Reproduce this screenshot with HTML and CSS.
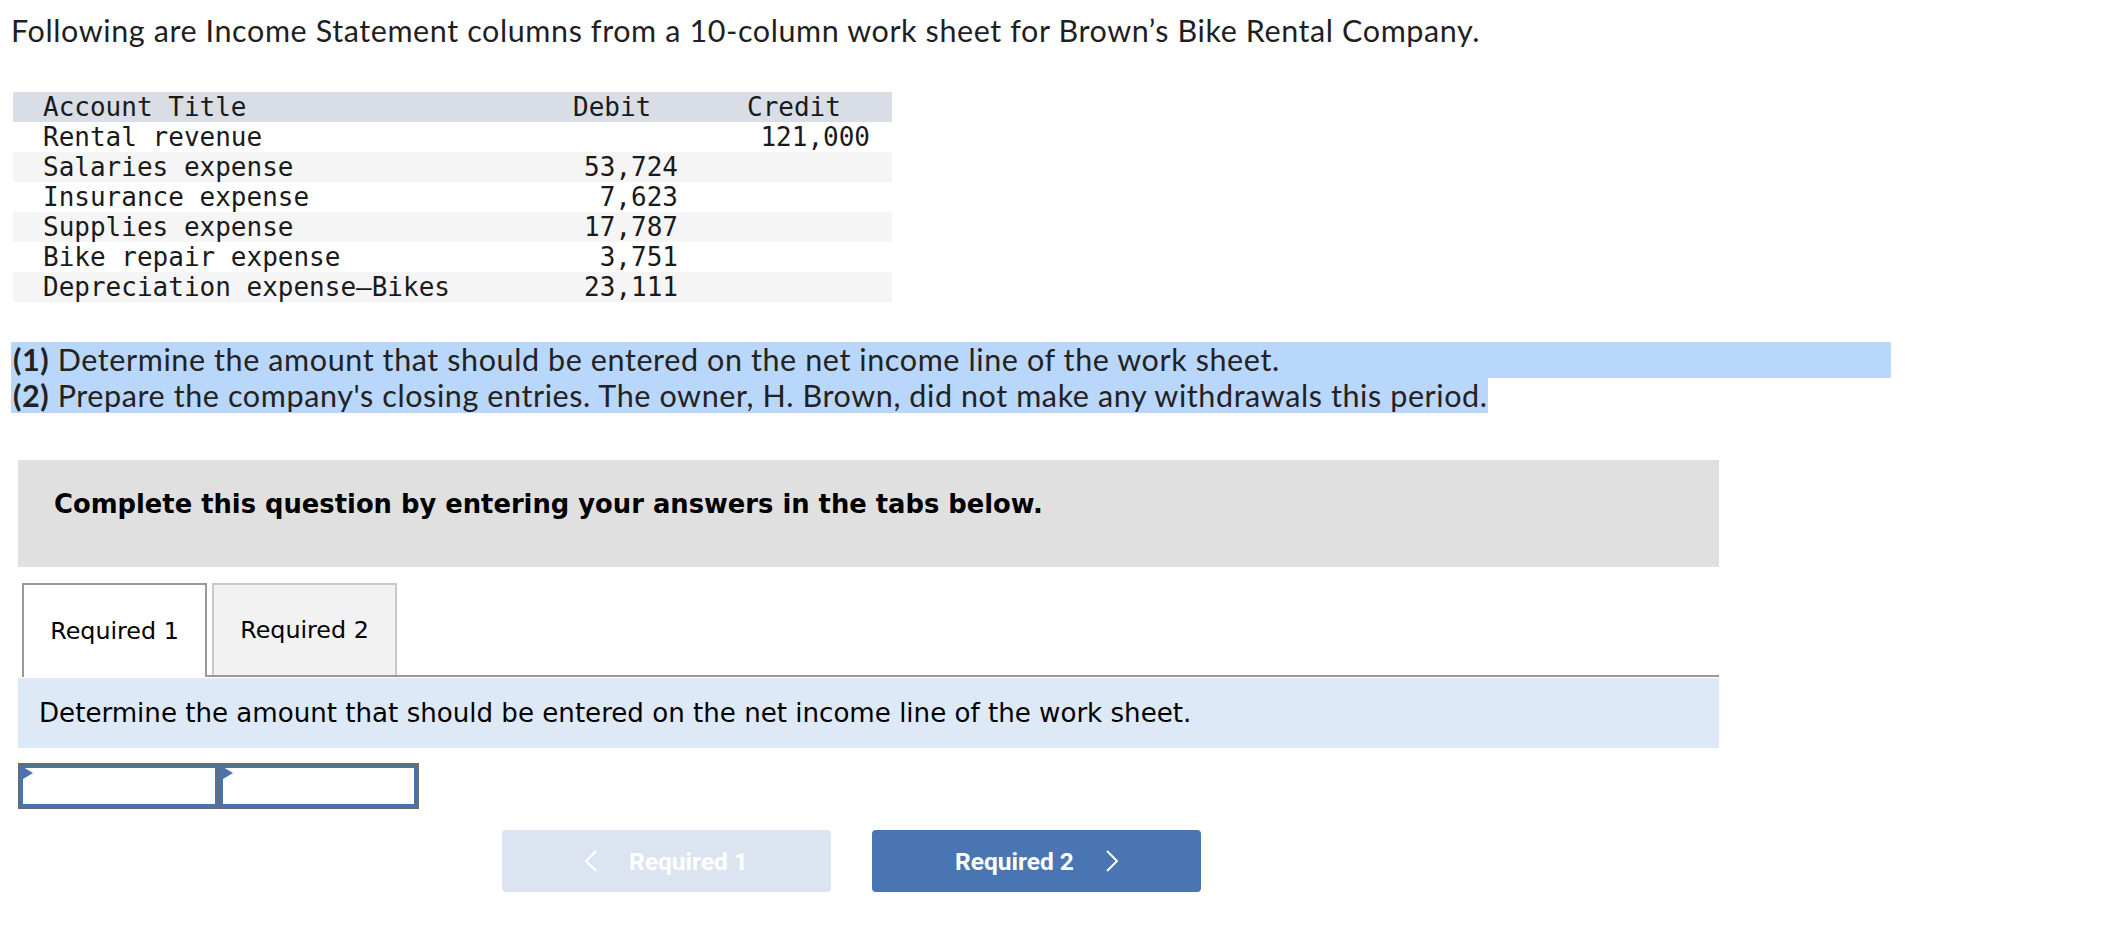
FILE: index.html
```html
<!DOCTYPE html>
<html lang="en">
<head>
<meta charset="utf-8">
<title>Brown's Bike Rental Company</title>
<link rel="stylesheet" href="styles.css">
</head>
<body>
<div class="page">
  <p class="intro">Following are Income Statement columns from a 10-column work sheet for Brown’s Bike Rental Company.</p>

  <table class="ws">
    <colgroup>
      <col class="col-title">
      <col class="col-debit">
      <col class="col-credit">
    </colgroup>
    <tr class="hd">
      <td class="t">Account Title</td>
      <td class="dh">Debit</td>
      <td class="ch">Credit</td>
    </tr>
    <tr>
      <td class="t">Rental revenue</td>
      <td class="d"></td>
      <td class="c">121,000</td>
    </tr>
    <tr class="alt">
      <td class="t">Salaries expense</td>
      <td class="d">53,724</td>
      <td class="c"></td>
    </tr>
    <tr>
      <td class="t">Insurance expense</td>
      <td class="d">7,623</td>
      <td class="c"></td>
    </tr>
    <tr class="alt">
      <td class="t">Supplies expense</td>
      <td class="d">17,787</td>
      <td class="c"></td>
    </tr>
    <tr>
      <td class="t">Bike repair expense</td>
      <td class="d">3,751</td>
      <td class="c"></td>
    </tr>
    <tr class="alt">
      <td class="t">Depreciation expense—Bikes</td>
      <td class="d">23,111</td>
      <td class="c"></td>
    </tr>
  </table>

  <div class="question">
    <div class="qline q1"><b>(1)</b> Determine the amount that should be entered on the net income line of the work sheet.</div>
    <div class="qline q2"><b>(2)</b> Prepare the company's closing entries. The owner, H. Brown, did not make any withdrawals this period.</div>
  </div>

  <div class="instr">Complete this question by entering your answers in the tabs below.</div>

  <div class="tabs">
    <div class="tab active">Required 1</div>
    <div class="tab-rest">
      <div class="tab">Required 2</div>
    </div>
  </div>

  <div class="prompt">Determine the amount that should be entered on the net income line of the work sheet.</div>

  <div class="answer">
    <div class="cell"></div>
    <div class="cell"></div>
  </div>

  <div class="nav">
    <button class="btn prev" type="button">
      <svg class="chev" width="12" height="22" viewBox="0 0 12 22"><polyline points="11,1 1,11 11,21" fill="none" stroke="#ffffff" stroke-width="2"/></svg>
      <span>Required 1</span>
    </button>
    <button class="btn next" type="button">
      <span>Required 2</span>
      <svg class="chev" width="12" height="22" viewBox="0 0 12 22"><polyline points="1,1 11,11 1,21" fill="none" stroke="#ffffff" stroke-width="2"/></svg>
    </button>
  </div>
</div>
</body>
</html>
```

FILE: styles.css
```css
html, body {
  margin: 0;
  padding: 0;
  background: #ffffff;
}

.page {
  font-family: "Lato", "Liberation Sans", sans-serif;
  color: #222222;
}

.intro {
  margin: 12px 0 0 11px;
  font-size: 30.5px;
  letter-spacing: 0.6px;
  line-height: 36px;
  color: #1f1f1f;
}

.ws {
  margin: 44px 0 0 13px;
  border-collapse: collapse;
  border-spacing: 0;
  table-layout: fixed;
  width: 879px;
  font-family: "DejaVu Sans Mono", "Liberation Mono", monospace;
  font-size: 26px;
  color: #1a1a1a;
}

.col-title { width: 530px; }
.col-debit { width: 150px; }
.col-credit { width: 199px; }

.ws td {
  height: 30px;
  padding: 0;
  line-height: 30px;
  vertical-align: top;
  white-space: pre;
}

.ws .hd td { background: #d9dde5; }
.ws .alt td { background: #f5f5f5; }

.ws .t { padding-left: 30px; }
.ws .dh { padding-left: 30px; text-align: left; }
.ws .ch { padding-left: 54px; text-align: left; }
.ws .d { text-align: right; padding-right: 15px; }
.ws .c { text-align: right; padding-right: 22px; }

.question {
  margin: 40px 0 0 11px;
  font-size: 30.5px;
  letter-spacing: 0.6px;
  color: #222222;
}

.qline {
  line-height: 35.5px;
  height: 35.5px;
  background: #b9d6fb;
  padding-left: 2px;
  white-space: nowrap;
}

.qline b { font-weight: 700; }

.q1 { width: 1878px; }
.q2 { width: fit-content; }

.instr {
  box-sizing: border-box;
  margin: 47px 0 0 18px;
  width: 1701px;
  height: 107px;
  padding: 29px 0 0 36px;
  background: #e0e0e0;
  font-family: "DejaVu Sans", Verdana, sans-serif;
  font-weight: 700;
  font-size: 25.8px;
  line-height: 30px;
  color: #000000;
}

.tabs {
  display: flex;
  align-items: flex-end;
  margin: 16px 0 0 22px;
  width: 1697px;
  font-family: "DejaVu Sans", Verdana, sans-serif;
  font-size: 23.8px;
  color: #000000;
}

.tab {
  box-sizing: border-box;
  width: 185px;
  display: flex;
  align-items: center;
  justify-content: center;
}

.tab.active {
  height: 94px;
  background: #ffffff;
  border: 2px solid #999999;
  border-bottom: none;
}

.tab-rest {
  flex: 1;
  display: flex;
  align-items: flex-end;
  border-bottom: 2px solid #999999;
}

.tab-rest .tab {
  height: 92px;
  margin-left: 5px;
  background: #f2f2f2;
  border: 2px solid #c8c8c8;
  border-bottom: none;
}

.prompt {
  box-sizing: border-box;
  margin: 1px 0 0 18px;
  width: 1701px;
  height: 70px;
  padding-left: 21px;
  background: #dee9f7;
  font-family: "DejaVu Sans", Verdana, sans-serif;
  font-size: 26.1px;
  line-height: 70px;
  color: #000000;
}

.answer {
  box-sizing: border-box;
  display: flex;
  gap: 2px;
  margin: 15px 0 0 18px;
  width: 401px;
  height: 46px;
  border: 2px solid #6b6b6b;
  background: #6b6b6b;
}

.cell {
  position: relative;
  flex: 1;
  background: #ffffff;
  border: 3px solid #4a72ad;
}

.cell::before {
  content: "";
  position: absolute;
  top: -1px;
  left: 0;
  border-left: 10px solid #4a72ad;
  border-top: 6px solid transparent;
  border-bottom: 6px solid transparent;
}

.nav {
  display: flex;
  gap: 41px;
  margin: 21px 0 0 502px;
}

.btn {
  box-sizing: border-box;
  width: 329px;
  height: 62px;
  border: none;
  border-radius: 4px;
  display: flex;
  align-items: center;
  justify-content: center;
  gap: 32px;
  font-family: "Roboto", "Liberation Sans", sans-serif;
  font-weight: 700;
  font-size: 24.5px;
  color: #ffffff;
  padding: 0;
}

.btn.prev { background: #dbe4f0; }
.btn.next { background: #4a75b3; }

.chev { display: block; }
```
